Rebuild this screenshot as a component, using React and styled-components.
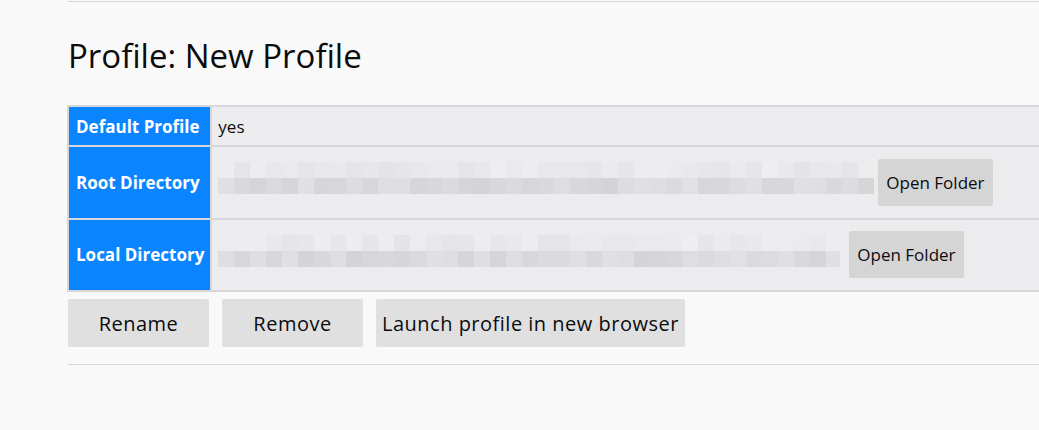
import styled, { createGlobalStyle } from 'styled-components'

const GlobalStyle = createGlobalStyle`
	html, body {
		margin: 0;
		padding: 0;
		background: #f9f9fa;
		overflow: hidden;
	}
	body {
		font-family: "Open Sans", "Noto Sans", sans-serif;
		color: #0c0c0d;
	}
`

const Page = styled.main`
	padding-left: 68px;
	width: 1100px;
`

const Rule = styled.div`
	height: 1px;
	background: #d7d7db;
	margin-top: ${p => p.$top || 0}px;
`

const Title = styled.h2`
	font-size: 33px;
	font-weight: 400;
	line-height: 40px;
	margin: 34px 0 29px 0;
`

const Table = styled.table`
	border-collapse: collapse;
	width: 100%;
	margin-left: -1px;
	font-size: 17px;
`

const Head = styled.th`
	background: #0a84ff;
	color: #fff;
	font-weight: 700;
	text-align: left;
	white-space: nowrap;
	width: 127px;
	padding: 0 6px 0 7px;
	border: 2px solid #d7d7db;
	height: ${p => p.$tall ? 70.5 : 38}px;
`

const Cell = styled.td`
	background: #ececee;
	border: 2px solid #d7d7db;
	padding: 0 6px;
`

const CellRow = styled.div`
	display: flex;
	align-items: center;
	gap: ${p => p.$gap}px;
`

const Mosaic = styled.svg`
	display: block;
	flex: none;
	margin-top: -8px;
`

const Button = styled.button`
	font-family: inherit;
	font-size: ${p => p.$small ? 17 : 20}px;
	letter-spacing: ${p => p.$small ? 0 : 0.5}px;
	color: #0c0c0d;
	background: rgba(12, 12, 13, 0.1);
	border: none;
	border-radius: 2px;
	height: ${p => p.$small ? 47 : 48}px;
	min-width: ${p => p.$small ? 0 : 141}px;
	padding: 0 ${p => p.$small ? 8 : 6}px;
	cursor: pointer;
`

const Actions = styled.div`
	display: flex;
	gap: 13px;
	margin-top: 7px;
`

// pixelated (redacted) path, two rows of blocks
const Redacted = ({ width, seed }) => {
	let s = seed
	const rnd = () => {
		s = (s * 9301 + 49297) % 233280
		return s / 233280
	}
	const cols = Math.ceil(width / 16)
	const blocks = []
	for (let i = 0; i < cols; i++) {
		const top = Math.round(228 + rnd() * 10)
		const bottom = Math.round(211 + rnd() * 14)
		blocks.push(<rect key={'t' + i} x={i * 16} y={0} width={16} height={16} fill={`rgb(${top},${top},${top + 2})`} />)
		blocks.push(<rect key={'b' + i} x={i * 16} y={16} width={16} height={16} fill={`rgb(${bottom},${bottom},${bottom + 2})`} />)
	}
	return (
		<Mosaic width={width} height={32} viewBox={`0 0 ${width} 32`}>
			{blocks}
		</Mosaic>
	)
}

const App = () => {
	return (
		<>
			<GlobalStyle />
			<Page>
				<Rule $top={1} />
				<Title>Profile: New Profile</Title>
				<Table>
					<tbody>
						<tr>
							<Head>Default Profile</Head>
							<Cell>yes</Cell>
						</tr>
						<tr>
							<Head $tall>Root Directory</Head>
							<Cell>
								<CellRow $gap={4}>
									<Redacted width={656} seed={17} />
									<Button $small>Open Folder</Button>
								</CellRow>
							</Cell>
						</tr>
						<tr>
							<Head $tall>Local Directory</Head>
							<Cell>
								<CellRow $gap={9}>
									<Redacted width={622} seed={91} />
									<Button $small>Open Folder</Button>
								</CellRow>
							</Cell>
						</tr>
					</tbody>
				</Table>
				<Actions>
					<Button>Rename</Button>
					<Button>Remove</Button>
					<Button>Launch profile in new browser</Button>
				</Actions>
				<Rule $top={17} />
			</Page>
		</>
	)
}

export default App
